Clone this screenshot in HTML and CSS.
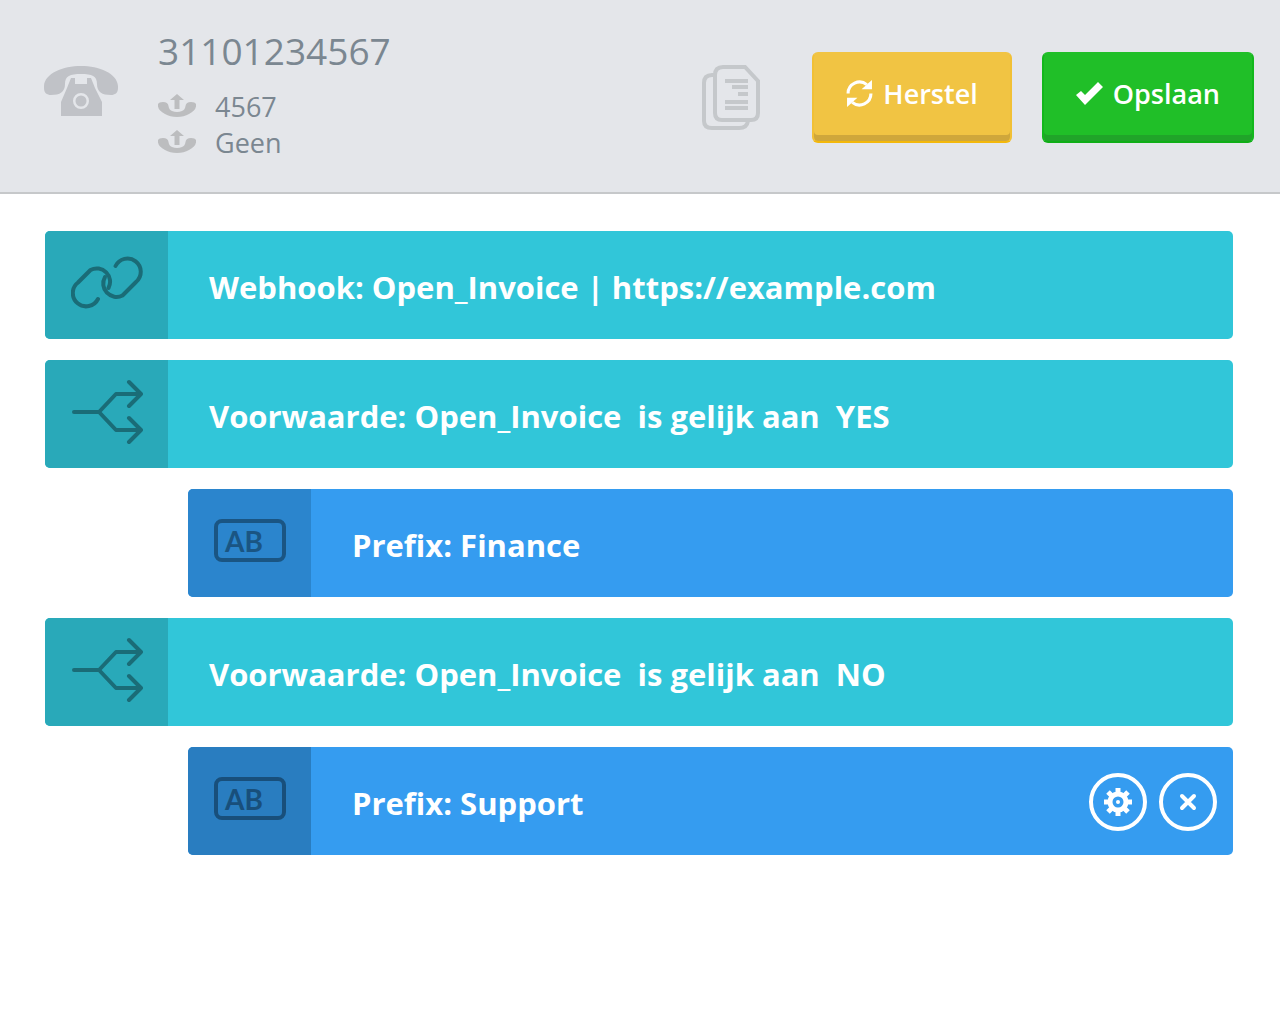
FILE: index.html
```html
<!doctype html>
<html lang="nl">
<head>
<meta charset="utf-8">
<title>31101234567</title>
<meta name="viewport" content="width=device-width, initial-scale=1">
<link rel="stylesheet" href="styles.css">
</head>
<body>
<svg class="symbols" aria-hidden="true">
  <symbol id="forward" viewBox="0 0 38 24">
    <path d="M19 0L26 6H21.500V15H16.500V6H12Z"/>
    <path d="M0 10Q1 8 5 8Q10 8 10.500 12Q11 16 14 17Q19 19 24 17Q27 16 27.500 12Q28 8 33 8Q37 8 38 10Q39 16 31 20Q26 23 19 23Q12 23 7 20Q-1 16 0 10Z"/>
  </symbol>
  <symbol id="fork" viewBox="0 0 72 72">
    <path d="M3 36H28L45 18H70M58 6L70 18L58 30M28 36L45 54H70M58 42L70 54L58 66"/>
  </symbol>
  <symbol id="prefix" viewBox="0 0 72 72">
    <rect x="2" y="16" width="68" height="39" rx="6"/>
    <text class="letters" x="11" y="47">AB</text>
  </symbol>
</svg>
<header class="header">
  <svg class="phone" viewBox="0 0 74 50" aria-hidden="true">
    <path d="M0 22C-1 8 18 0 37 0S75 8 74 22C74 27 71 29 67 29C58 29 53 26 53 18C53 10 48 8 37 8S21 10 21 18C21 26 16 29 7 29C3 29 0 27 0 22Z"/>
    <path fill-rule="evenodd" d="M27 12H31V18H43V12H47L51 22L58 36V50H17V36L23 22ZM37 27A8 8 0 1 0 37 43A8 8 0 1 0 37 27ZM37 29.500A5.500 5.500 0 1 1 37 40.500A5.500 5.500 0 1 1 37 29.500Z"/>
  </svg>
  <div class="details">
    <h1>31101234567</h1>
    <div class="forward"><svg aria-hidden="true"><use href="#forward"/></svg>4567</div>
    <div class="forward"><svg aria-hidden="true"><use href="#forward"/></svg>Geen</div>
  </div>
  <div class="actions">
    <button class="copy" type="button" aria-label="Kopieer">
      <svg viewBox="0 0 58 66" aria-hidden="true">
        <path d="M13 10H10Q2 10 2 18V56Q2 63 10 63H37Q45 63 46 56"/>
        <path d="M21 2H43L56 16V48Q56 55 49 55H20Q13 55 13 48V10Q13 2 21 2Z"/>
        <path d="M23 16H46M30 22H46M36 29H46M23 37H46M23 43H46"/>
      </svg>
    </button>
    <button class="button reset" type="button">
      <svg viewBox="0 0 26 26" aria-hidden="true">
        <path class="arc" d="M2 13A11 11 0 0 1 20 4.500M24 13A11 11 0 0 1 6 21.500"/>
        <path d="M25 0V9H15ZM1 26V17H11Z"/>
      </svg>
      Herstel
    </button>
    <button class="button save" type="button">
      <svg viewBox="0 0 27 23" aria-hidden="true"><path d="M0 13L5 9L9 13L22 0L27 5L9 23Z"/></svg>
      Opslaan
    </button>
  </div>
</header>
<ul class="steps">
  <li class="step">
    <div class="icon">
      <svg viewBox="0 0 72 72" aria-hidden="true">
        <path d="M27 52A13.300 13.300 0 1 1 7 35.500L19.500 23A13.300 13.300 0 0 1 37.500 41"/>
        <path d="M34 30A13.300 13.300 0 0 0 51.500 48.500L65 35A13.300 13.300 0 1 0 44.500 19"/>
      </svg>
    </div>
    <p>Webhook: Open_Invoice | https://example.com</p>
  </li>
  <li class="step">
    <div class="icon"><svg aria-hidden="true"><use href="#fork"/></svg></div>
    <p>Voorwaarde: Open_Invoice&nbsp; is gelijk aan&nbsp; YES</p>
  </li>
  <li class="step prefix">
    <div class="icon"><svg aria-hidden="true"><use href="#prefix"/></svg></div>
    <p>Prefix: Finance</p>
  </li>
  <li class="step">
    <div class="icon"><svg aria-hidden="true"><use href="#fork"/></svg></div>
    <p>Voorwaarde: Open_Invoice&nbsp; is gelijk aan&nbsp; NO</p>
  </li>
  <li class="step prefix active">
    <div class="icon"><svg aria-hidden="true"><use href="#prefix"/></svg></div>
    <p>Prefix: Support</p>
    <div class="tools">
      <button type="button" aria-label="Instellingen">
        <svg viewBox="0 0 30 30" aria-hidden="true">
          <circle cx="15" cy="15" r="8"/>
          <path d="M15 1V7M15 23V29M1 15H7M23 15H29M5 5L9 9M21 21L25 25M5 25L9 21M21 9L25 5"/>
          <circle class="dot" cx="15" cy="15" r="2"/>
        </svg>
      </button>
      <button type="button" aria-label="Verwijderen">
        <svg class="cross" viewBox="0 0 30 30" aria-hidden="true"><path d="M9 9L21 21M21 9L9 21"/></svg>
      </button>
    </div>
  </li>
</ul>
</body>
</html>
```
FILE: styles.css
```css
body {
  margin: 0;
  background-color: white;
  font-family: "Open Sans", sans-serif;
}
button {
  padding: 0;
  border: 0;
  background: none;
  font-family: inherit;
  cursor: pointer;
}
.symbols {
  display: none;
}
.header {
  display: flex;
  align-items: center;
  padding: 28px 26px 31px 44px;
  background-color: #e4e6ea;
  border-bottom: 2px solid #c6c8ca;
  color: #7b8791;
}
.phone {
  width: 74px;
  height: 50px;
  margin: 0 40px 8px 0;
  fill: #c0c2c7;
}
.details {
  flex: 1;
}
.details h1 {
  margin: 0 0 15px 0;
  font-size: 37px;
  font-weight: normal;
  line-height: 46px;
}
.forward {
  display: flex;
  align-items: center;
  gap: 19px;
  font-size: 27px;
  line-height: 36px;
}
.forward svg {
  width: 38px;
  height: 24px;
  margin-bottom: 2px;
  fill: #bcbdbf;
}
.actions {
  display: flex;
  align-items: center;
  gap: 30px;
  margin-top: 6px;
}
.copy {
  margin-right: 22px;
}
.copy svg {
  display: block;
  width: 58px;
  height: 66px;
  fill: none;
  stroke: #c5c8cb;
  stroke-width: 4;
}
.button {
  display: flex;
  align-items: center;
  gap: 10px;
  padding: 20px 32px 27px;
  border: 2px solid;
  border-radius: 6px;
  color: white;
  font-size: 27px;
  font-weight: 600;
  line-height: 40px;
}
.button svg {
  width: 27px;
  height: 27px;
  margin-bottom: 2px;
  fill: white;
}
.button .arc {
  fill: none;
  stroke: white;
  stroke-width: 3;
}
.reset {
  background-color: #f1c443;
  border-color: #f1c443 #f1c035 #f3b80c;
  box-shadow: inset 0 -6px 0 #cfa73b;
}
.save {
  background-color: #20bf28;
  border-color: #20bf28 #12b81c #0fae17;
  box-shadow: inset 0 -6px 0 #20a429;
}
.steps {
  display: grid;
  gap: 21px;
  margin: 0;
  padding: 37px 47px 37px 45px;
  list-style: none;
}
.step {
  display: flex;
  min-height: 108px;
  border-radius: 5px;
  background-color: #31c6d9;
  color: white;
  overflow: hidden;
}
.step p {
  flex: 1;
  align-self: center;
  margin: 0;
  padding: 4px 0 0 41px;
  font-size: 31px;
  font-weight: bold;
  line-height: 42px;
}
.icon {
  display: grid;
  place-items: center;
  width: 123px;
  padding-bottom: 4px;
  box-sizing: border-box;
  background-color: #29a9b9;
  color: #1a6c77;
}
.icon svg {
  width: 72px;
  height: 72px;
  fill: none;
  stroke: currentColor;
  stroke-width: 4;
  stroke-linecap: round;
  stroke-linejoin: round;
}
.letters {
  fill: currentColor;
  stroke: none;
  font-family: Lato, sans-serif;
  font-size: 28px;
  font-weight: bold;
}
.prefix {
  margin-left: 143px;
  background-color: #359cf0;
}
.prefix .icon {
  background-color: #2b85cd;
  color: #1a5583;
}
.active .icon {
  background-color: #297dc0;
  color: #184f7b;
}
.tools {
  display: flex;
  align-items: center;
  gap: 12px;
  padding: 2px 16px 0 0;
}
.tools button {
  display: grid;
  place-items: center;
  width: 58px;
  height: 58px;
  border: 4px solid white;
  border-radius: 50%;
}
.tools svg {
  width: 30px;
  height: 30px;
  fill: none;
  stroke: white;
  stroke-width: 5;
}
.tools .cross {
  stroke-width: 4;
  stroke-linecap: round;
}
.tools .dot {
  fill: white;
  stroke: none;
}
```
